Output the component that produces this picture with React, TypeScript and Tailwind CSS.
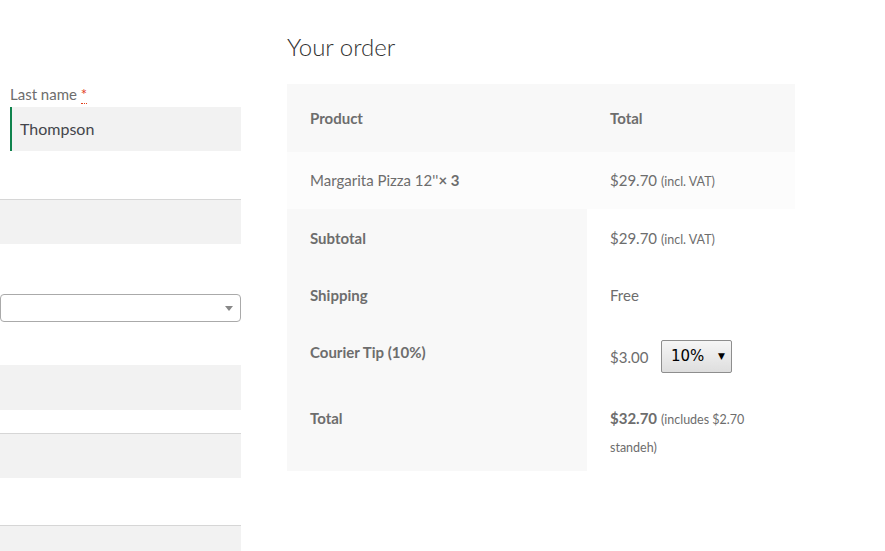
import React from "react";

const font = { fontFamily: "Lato, 'Open Sans', sans-serif" };

export default function App() {
  return (
    <div className="w-[885px] h-[551px] overflow-hidden bg-white flex text-[#6d6d6d]" style={font}>
      {/* Left form column */}
      <div className="w-[241px] shrink-0 flex flex-col pt-[82px]">
        <div className="ml-[10px] flex flex-col shrink-0">
          <label className="h-[25px] text-[15px] leading-[25px] text-[#6d6d6d]">
            Last name{" "}
            <abbr className="text-[#e2401c] no-underline border-b border-dotted border-[#e2401c]">*</abbr>
          </label>
          <div className="h-[44px] bg-[#f2f2f2] border-l-2 border-[#0f834d] flex items-center pl-[8px] text-[16px] text-[#43454b]">
            Thompson
          </div>
        </div>
        <div className="shrink-0 mt-[48px] h-[45px] bg-[#f2f2f2] border-t border-[#d6d6d6]" />
        <div className="shrink-0 mt-[50px] h-[28px] bg-white border border-[#aaaaaa] rounded-[4px] flex items-center justify-end pr-[7px]">
          <span className="w-0 h-0 border-l-[4px] border-r-[4px] border-t-[5px] border-l-transparent border-r-transparent border-t-[#888888]" />
        </div>
        <div className="shrink-0 mt-[43px] h-[45px] bg-[#f2f2f2]" />
        <div className="shrink-0 mt-[23px] h-[45px] bg-[#f2f2f2] border-t border-[#d6d6d6]" />
        <div className="shrink-0 mt-[47px] h-[45px] bg-[#f2f2f2] border-t border-[#d6d6d6]" />
      </div>

      {/* Right order column */}
      <div className="ml-[46px] w-[508px] shrink-0 flex flex-col pt-[31px]">
        <h3 className="h-[53px] text-[24px] leading-[32px] font-light text-[#333333]">Your order</h3>
        <table className="w-[508px] table-fixed border-collapse text-[15px]">
          <colgroup>
            <col className="w-[300px]" />
            <col className="w-[208px]" />
          </colgroup>
          <thead>
            <tr className="bg-[#f8f8f8] h-[68px]">
              <th className="text-left font-bold pl-[23px] align-middle">Product</th>
              <th className="text-left font-bold pl-[23px] align-middle">Total</th>
            </tr>
          </thead>
          <tbody>
            <tr className="bg-[#fcfcfc] h-[57px]">
              <td className="pl-[23px] align-middle">
                Margarita Pizza 12''<strong className="font-bold">× 3</strong>
              </td>
              <td className="pl-[23px] align-middle">
                $29.70 <small className="text-[12.5px]">(incl. VAT)</small>
              </td>
            </tr>
          </tbody>
          <tfoot>
            <tr className="h-[58px]">
              <th className="bg-[#f8f8f8] text-left font-bold pl-[23px] align-middle">Subtotal</th>
              <td className="bg-white pl-[23px] align-middle">
                $29.70 <small className="text-[12.5px]">(incl. VAT)</small>
              </td>
            </tr>
            <tr className="h-[57px]">
              <th className="bg-[#f8f8f8] text-left font-bold pl-[23px] align-middle">Shipping</th>
              <td className="bg-white pl-[23px] align-middle">Free</td>
            </tr>
            <tr className="h-[65px]">
              <th className="bg-[#f8f8f8] text-left font-bold pl-[23px] align-top pt-[17px]">Courier Tip (10%)</th>
              <td className="bg-white pl-[23px] pr-[23px] align-top pt-[16px]">
                <div className="flex items-center">
                  <span className="w-[51px] pt-[1px]">$3.00</span>
                  <div
                    className="w-[71px] h-[33px] border border-[#8e8e8e] rounded-[2px] bg-gradient-to-b from-[#f6f6f6] to-[#dedede] flex items-center justify-between pl-[9px] pr-[6px] text-black"
                    style={{ fontFamily: "'DejaVu Sans', sans-serif" }}
                  >
                    <span className="text-[15px]">10%</span>
                    <span className="text-[9px]">▼</span>
                  </div>
                </div>
              </td>
            </tr>
            <tr className="h-[82px]">
              <th className="bg-[#f8f8f8] text-left font-bold pl-[23px] align-top pt-[18px]">Total</th>
              <td className="bg-white pl-[23px] pr-[23px] align-top pt-[16px] leading-[27px]">
                <div>
                  <strong className="font-bold">$32.70</strong>{" "}
                  <small className="text-[12.5px]">(includes $2.70</small>
                </div>
                <div>
                  <small className="text-[12.5px]">standeh)</small>
                </div>
              </td>
            </tr>
          </tfoot>
        </table>
      </div>
    </div>
  );
}
